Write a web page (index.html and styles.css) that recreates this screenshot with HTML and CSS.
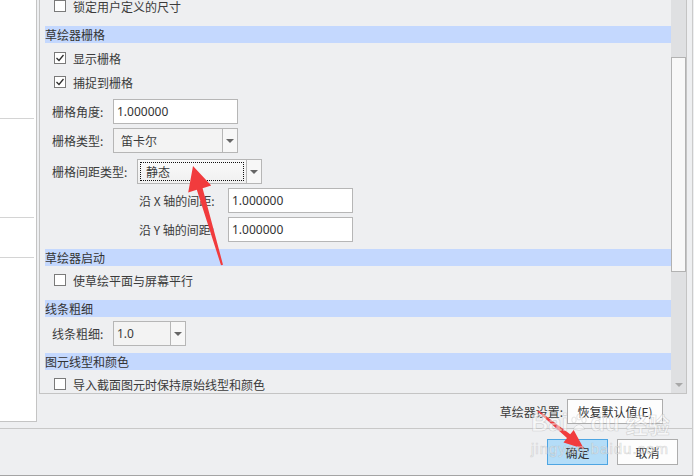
FILE: index.html
```html
<!DOCTYPE html>
<html lang="zh-CN">
<head>
<meta charset="UTF-8">
<title>草绘器选项</title>
<link rel="stylesheet" href="styles.css">
</head>
<body>
<div class="dialog">
  <div class="top">
    <div class="sidebar">
      <div class="side-item s1"></div>
      <div class="side-item s2"></div>
      <div class="side-item s3"></div>
    </div>
    <div class="main">
      <div class="panel">
        <div class="list">
          <div class="check-row"><span class="box"></span>锁定用户定义的尺寸</div>

          <div class="section mt8">草绘器栅格</div>
          <div class="check-row mt3"><span class="box"><svg viewBox="0 0 10 10"><polyline points="1.5,5 4,7.5 8.5,2"/></svg></span>显示栅格</div>
          <div class="check-row"><span class="box"><svg viewBox="0 0 10 10"><polyline points="1.5,5 4,7.5 8.5,2"/></svg></span>捕捉到栅格</div>
          <div class="field-row mt5">
            <span class="label">栅格角度:</span>
            <span class="input">1.000000</span>
          </div>
          <div class="field-row mt4">
            <span class="label">栅格类型:</span>
            <span class="combo"><span class="combo-text">笛卡尔</span><span class="combo-btn"><i class="tri"></i></span></span>
          </div>
          <div class="field-row mt6">
            <span class="label wide">栅格间距类型:</span>
            <span class="combo light"><span class="combo-text"><span class="focus">静态</span></span><span class="combo-btn"><i class="tri"></i></span></span>
          </div>
          <div class="field-row sub mt4">
            <span class="label axis">沿 X 轴的间距:</span>
            <span class="input">1.000000</span>
          </div>
          <div class="field-row sub mt4">
            <span class="label axis">沿 Y 轴的间距:</span>
            <span class="input">1.000000</span>
          </div>

          <div class="section mt7">草绘器启动</div>
          <div class="check-row mt2"><span class="box"></span>使草绘平面与屏幕平行</div>

          <div class="section mt8">线条粗细</div>
          <div class="field-row mt4">
            <span class="label">线条粗细:</span>
            <span class="combo small"><span class="combo-text">1.0</span><span class="combo-btn"><i class="tri"></i></span></span>
          </div>

          <div class="section mt7">图元线型和颜色</div>
          <div class="check-row mt2"><span class="box"></span>导入截面图元时保持原始线型和颜色</div>
        </div>
        <div class="scrollbar">
          <div class="thumb"></div>
          <div class="scroll-down"><i class="tri pale"></i></div>
        </div>
      </div>
      <div class="settings">
        <span>草绘器设置:</span>
        <button class="btn reset">恢复默认值(E)</button>
      </div>
    </div>
  </div>
  <div class="footer">
    <button class="btn ok">确定</button>
    <button class="btn">取消</button>
  </div>
</div>

<!-- annotation overlay: red arrows and watermark -->
<svg class="marks" width="694" height="476" viewBox="0 0 694 476">
  <polygon points="193,166 211.2,185.6 202.6,188.2 223,264.7 221,265.3 196.8,189.8 188.2,192.4" />
  <polygon points="584,449 563.5,442.4 567,438.1 537.5,411.6 538.5,410.4 570.2,434.3 573.7,430" />
</svg>
<div class="watermark">
  <div class="wm-logo">Bai<svg class="paw" viewBox="0 0 20 20"><ellipse cx="5" cy="7" rx="2.2" ry="3"/><ellipse cx="10" cy="4" rx="2.2" ry="3"/><ellipse cx="15" cy="7" rx="2.2" ry="3"/><path d="M4 16 Q10 7 16 16 Q10 19 4 16 Z"/></svg>du<span class="wm-cn">经验</span></div>
  <div class="wm-url">jingyan.baidu.com</div>
</div>
</body>
</html>
```

FILE: styles.css
```css
* {
    box-sizing: border-box;
}
body {
    margin: 0;
    width: 694px;
    height: 476px;
    overflow: hidden;
    position: relative;
    background: #eeeff1;
    font-family: "Noto Sans CJK SC", "Noto Sans", sans-serif;
    font-size: 12px;
    color: #3b3b3b;
}
.dialog {
    width: 693px;
    height: 476px;
    border-right: 1px solid #cbcbcb;
    border-bottom: 1px solid #a4a4a4;
    display: flex;
    flex-direction: column;
}
.top {
    height: 429px;
    border-bottom: 1px solid #c8c8c8;
    display: flex;
}

/* left tree area */
.sidebar {
    width: 37px;
    height: 422px;
    background: #fff;
    border-right: 1px solid #c4c4c4;
    border-bottom: 1px solid #c4c4c4;
}
.side-item {
    margin-right: 2px;
    border-bottom: 1px solid #d4d4d4;
}
.s1 { height: 119px; }
.s2 { height: 99px; }
.s3 { height: 40px; }

.main {
    margin-left: 2px;
    width: 648px;
    display: flex;
    flex-direction: column;
}
.panel {
    height: 394px;
    border: 1px solid #c4c4c4;
    border-top: none;
    display: flex;
    overflow: hidden;
}
.list {
    width: 631px;
    margin-top: -6px;
    flex-shrink: 0;
}
.mt2 { margin-top: 2px; }
.mt3 { margin-top: 3px; }
.mt4 { margin-top: 4px; }
.mt5 { margin-top: 5px; }
.mt6 { margin-top: 6px; }
.mt7 { margin-top: 7px; }
.mt8 { margin-top: 8px; }

.section {
    height: 17px;
    line-height: 17px;
    margin-left: 5px;
    background: #c4d8fe;
    color: #333;
}
.check-row {
    height: 24px;
    display: flex;
    align-items: center;
    padding-left: 14px;
}
.box {
    width: 12px;
    height: 12px;
    border: 1px solid #7a7a7a;
    background: #fff;
    margin-right: 7px;
    display: flex;
}
.box svg {
    width: 10px;
    height: 10px;
    fill: none;
    stroke: #2e2e2e;
    stroke-width: 1.3;
}
.field-row {
    height: 25px;
    display: flex;
    align-items: center;
    padding-left: 12px;
}
.field-row.sub {
    padding-left: 99px;
}
.label { width: 61px; }
.label.wide { width: 85px; }
.label.axis { width: 89px; }

.input {
    width: 125px;
    height: 25px;
    border: 1px solid #b6b6b6;
    background: #fff;
    padding-left: 3px;
    line-height: 23px;
    font-family: "Noto Sans", sans-serif;
    color: #333;
}
.combo {
    width: 125px;
    height: 25px;
    border: 1px solid #b6b6b6;
    display: flex;
    background: #f3f3f3;
}
.combo.small {
    width: 73px;
}
.combo-text {
    flex: 1;
    padding-left: 7px;
    line-height: 23px;
}
.combo.small .combo-text {
    padding-left: 3px;
    font-family: "Noto Sans", sans-serif;
}
.combo.light .combo-text {
    padding: 2px;
    background: linear-gradient(#fafafa, #f0f0f0);
}
.focus {
    display: block;
    height: 19px;
    line-height: 17px;
    padding-left: 5px;
    border: 1px dotted #111;
}
.combo-btn {
    width: 15px;
    border-left: 1px solid #b6b6b6;
    background: #f7f7f7;
    display: flex;
    align-items: center;
    justify-content: center;
}
.tri {
    width: 0;
    height: 0;
    border-left: 4px solid transparent;
    border-right: 4px solid transparent;
    border-top: 4px solid #666;
}
.tri.pale {
    border-top-color: #a8a8a8;
}

.scrollbar {
    width: 15px;
    background: #dfe0e2;
    display: flex;
    flex-direction: column;
}
.thumb {
    margin-top: 57px;
    height: 215px;
    background: #f8f8f8;
    border: 1px solid #b2b2b2;
}
.scroll-down {
    margin-top: auto;
    height: 15px;
    display: flex;
    align-items: center;
    justify-content: center;
    margin-bottom: 1px;
}

.settings {
    height: 34px;
    display: flex;
    align-items: center;
    justify-content: flex-end;
    gap: 4px;
    padding-right: 24px;
}
.btn {
    height: 25px;
    border: 1px solid #adadad;
    background: #fdfdfd;
    font-family: "Noto Sans CJK SC", sans-serif;
    font-size: 12px;
    color: #333;
    padding: 0;
}
.btn.reset {
    width: 96px;
}
.footer {
    height: 46px;
    display: flex;
    justify-content: flex-end;
    align-items: flex-start;
    gap: 9px;
    padding-top: 10px;
    padding-right: 14px;
}
.footer .btn {
    width: 61px;
    height: 26px;
}
.btn.ok {
    background: #b4ddf8;
    border-color: #4ea5e2;
}

.marks {
    position: absolute;
    left: 0;
    top: 0;
    pointer-events: none;
    fill: #f13b3d;
}
.watermark {
    position: absolute;
    left: 531px;
    top: 408px;
    pointer-events: none;
    color: rgba(255, 255, 255, 0.5);
    -webkit-text-stroke: 0.7px rgba(150, 150, 150, 0.35);
}
.wm-logo {
    font-family: "Liberation Sans", sans-serif;
    font-weight: bold;
    font-size: 24px;
    line-height: 30px;
    display: flex;
    align-items: center;
}
.paw {
    width: 20px;
    height: 20px;
    margin: 0 1px;
    fill: rgba(255, 255, 255, 0.5);
    stroke: rgba(150, 150, 150, 0.35);
    stroke-width: 0.7;
}
.wm-cn {
    font-family: "Noto Sans CJK SC", sans-serif;
    font-size: 22px;
    margin-left: 6px;
}
.wm-url {
    font-family: "Liberation Sans", sans-serif;
    font-size: 15px;
    letter-spacing: 1px;
    margin-top: 2px;
}
```
